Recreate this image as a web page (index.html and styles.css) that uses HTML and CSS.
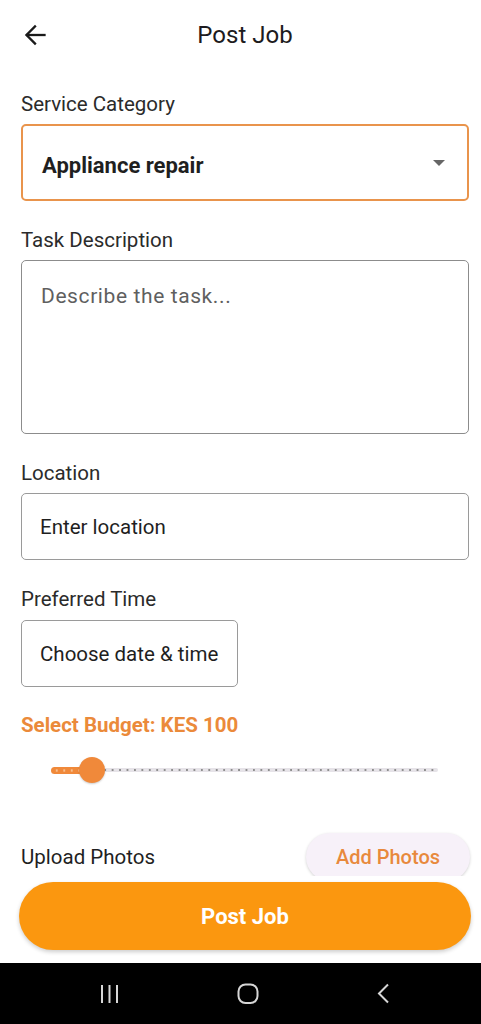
FILE: index.html
```html
<!DOCTYPE html>
<html lang="en">
<head>
    <meta charset="UTF-8">
    <meta name="viewport" content="width=device-width, initial-scale=1.0">
    <title>Post Job</title>
    <link rel="stylesheet" href="styles.css">
</head>
<body>
    <div class="screen">
        <header class="appbar">
            <button class="back" aria-label="Back">
                <svg width="24" height="24" viewBox="0 0 24 24" fill="none" stroke="#1a1a1a" stroke-width="2.3" stroke-linecap="square">
                    <path d="M21.5 12H4"/>
                    <path d="M12 3.5L3.5 12L12 20.5"/>
                </svg>
            </button>
            <h1 class="title">Post Job</h1>
        </header>

        <main class="form">
            <div class="label first">Service Category</div>
            <div class="field select">
                <span class="select-value">Appliance repair</span>
                <span class="caret"></span>
            </div>

            <div class="label">Task Description</div>
            <div class="field textarea">
                <span class="placeholder">Describe the task...</span>
            </div>

            <div class="label">Location</div>
            <div class="field input">Enter location</div>

            <div class="label">Preferred Time</div>
            <div class="field input picker">Choose date &amp; time</div>

            <div class="budget">Select Budget: KES 100</div>
            <div class="slider">
                <div class="track">
                    <div class="fill" style="width: 41px"></div>
                    <div class="rest"></div>
                </div>
                <div class="thumb" style="left: 41px"></div>
            </div>

            <div class="upload-row">
                <span class="upload-label">Upload Photos</span>
                <button class="add-photos">Add Photos</button>
            </div>
        </main>

        <footer class="footer">
            <button class="post-btn">Post Job</button>
        </footer>

        <nav class="navbar">
            <svg width="24" height="24" viewBox="0 0 24 24" fill="none" stroke="#d6d6d6" stroke-width="2">
                <path d="M4 3v18M11.5 3v18M19 3v18"/>
            </svg>
            <svg width="24" height="24" viewBox="0 0 24 24" fill="none" stroke="#d6d6d6" stroke-width="2">
                <rect x="2.5" y="2.5" width="19" height="18.5" rx="7"/>
            </svg>
            <svg width="24" height="24" viewBox="0 0 24 24" fill="none" stroke="#d6d6d6" stroke-width="2">
                <path d="M15 2.5L6 11.5L15 20.5"/>
            </svg>
        </nav>
    </div>
</body>
</html>
```

FILE: styles.css
```css
/* Post Job screen */
* { box-sizing: border-box; }

body {
    margin: 0;
    font-family: 'Roboto', sans-serif;
    background-color: #ffffff;
    color: #1d1b20;
}

.screen {
    width: 481px;
    height: 1024px;
    display: flex;
    flex-direction: column;
}

.appbar {
    height: 70px;
    display: flex;
    align-items: center;
    padding-left: 23px;
    padding-right: 62px;
    flex-shrink: 0;
}
.back {
    border: none;
    background: none;
    padding: 0;
    width: 24px;
    height: 24px;
    margin-right: 24px;
    display: flex;
}
.title {
    flex: 1;
    margin: 0;
    text-align: center;
    font-size: 24px;
    font-weight: 400;
    color: #1d1b20;
}

.form {
    flex: 1;
    overflow: hidden;
    padding: 0 12px 0 21px;
    display: flex;
    flex-direction: column;
}

.label {
    font-size: 20.5px;
    line-height: 22px;
    color: #2b2b2b;
    margin-top: 28px;
    margin-bottom: 9px;
}
.label.first { margin-top: 23px; }

.field {
    border: 1.5px solid #8c8c8c;
    border-radius: 5px;
    flex-shrink: 0;
}
.select {
    height: 77px;
    border: 2px solid #e9944c;
    display: flex;
    align-items: center;
    padding: 0 22px 0 19px;
    justify-content: space-between;
}
.select-value {
    font-size: 22px;
    font-weight: 700;
    color: #1f1f1f;
    padding-top: 5px;
}
.caret {
    width: 0;
    height: 0;
    border-left: 6px solid transparent;
    border-right: 6px solid transparent;
    border-top: 6px solid #666666;
}

.textarea {
    height: 174px;
    padding: 24px 19px;
}
.placeholder {
    font-size: 21px;
    line-height: 22px;
    color: #5f5f5f;
    letter-spacing: 0.6px;
}

.input {
    height: 67px;
    display: flex;
    align-items: center;
    padding: 0 18px;
    font-size: 20.5px;
    color: #1f1f1f;
    border-color: #9a9a9a;
}
.picker {
    width: 217px;
    margin-top: 1px;
}

.budget {
    margin-top: 27px;
    font-size: 20.5px;
    line-height: 22px;
    font-weight: 700;
    color: #eb8a3a;
}

.slider {
    position: relative;
    height: 48px;
    margin: 10px 31px 0 30px;
    display: flex;
    align-items: center;
    flex-shrink: 0;
}
.track {
    width: 100%;
    display: flex;
    align-items: center;
}
.fill {
    height: 7px;
    border-radius: 4px 0 0 4px;
    background: radial-gradient(circle, #f7bf8f 1px, transparent 1.3px) 2px center / 7.5px 7px repeat-x, #f0893a;
}
.rest {
    flex: 1;
    height: 4px;
    border-radius: 0 2px 2px 0;
    background: radial-gradient(circle, #8e8e8e 0.9px, transparent 1.2px) 2px center / 7.45px 4px repeat-x, #e6e3e8;
}
.thumb {
    position: absolute;
    top: 50%;
    width: 26px;
    height: 26px;
    margin-left: -13px;
    margin-top: -13px;
    border-radius: 50%;
    background-color: #f0893a;
    box-shadow: 0 1px 2px rgba(0, 0, 0, 0.2);
}

.upload-row {
    margin-top: 39px;
    display: flex;
    align-items: center;
    justify-content: space-between;
    height: 48px;
    flex-shrink: 0;
}
.upload-label {
    font-size: 20.5px;
    color: #1f1f1f;
}
.add-photos {
    width: 164px;
    height: 48px;
    margin-right: -1px;
    border: none;
    border-radius: 24px;
    background-color: #f7f1f9;
    color: #e8893d;
    font-family: 'Roboto', sans-serif;
    font-size: 20px;
    font-weight: 500;
    box-shadow: 0 1px 3px rgba(0, 0, 0, 0.18);
}

.footer {
    padding: 6px 10px 13px 19px;
    flex-shrink: 0;
}
.post-btn {
    width: 452px;
    height: 68px;
    border: none;
    border-radius: 34px;
    background-color: #fb970f;
    color: #ffffff;
    font-family: 'Roboto', sans-serif;
    font-size: 22px;
    font-weight: 700;
    box-shadow: 0 2px 4px rgba(0, 0, 0, 0.2);
}

.navbar {
    height: 61px;
    flex-shrink: 0;
    background-color: #000000;
    display: flex;
    align-items: center;
    justify-content: space-between;
    padding: 0 84px 0 98px;
}
```
